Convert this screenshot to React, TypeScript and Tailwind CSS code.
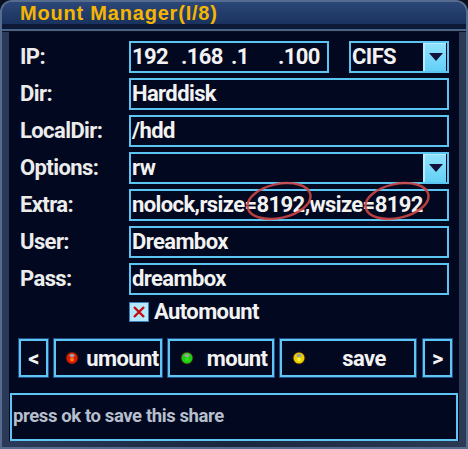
import type { ReactNode } from "react";

const face = "font-['Roboto','Liberation_Sans',sans-serif]";

function Field({
  children,
  className = "",
}: {
  children?: ReactNode;
  className?: string;
}) {
  return (
    <div
      className={
        "flex h-[32px] items-center border-2 border-[#5cc4f0] pl-[1px] text-[22px] font-bold leading-none tracking-[-0.6px] text-[#f2f2f2] " +
        className
      }
    >
      {children}
    </div>
  );
}

function DropArrow() {
  return (
    <div className="ml-auto mr-[1px] flex h-[28px] w-[23px] shrink-0 items-center justify-center border-l-2 border-t border-[#b8ecff] bg-gradient-to-b from-[#8fe2fc] to-[#62d0f6]">
      <svg width="14" height="10" viewBox="0 0 14 10">
        <polygon points="0,1 14,1 7,9" fill="#150f3c" />
      </svg>
    </div>
  );
}

function Led({ color, glow }: { color: string; glow: string }) {
  return (
    <svg className="shrink-0" width="14" height="14" viewBox="0 0 14 14">
      <circle cx="7" cy="7" r="6.5" fill="#3a1a10" />
      <circle cx="7" cy="7" r="5.5" fill={color} />
      <ellipse cx="7" cy="4.6" rx="2.6" ry="1.8" fill="#a0a0a0" />
      <circle cx="7" cy="8.5" r="2" fill={glow} />
    </svg>
  );
}

// hand-drawn red ring around a value
function Ringed({ children }: { children: ReactNode }) {
  return (
    <span className="relative">
      {children}
      <svg
        className="pointer-events-none absolute left-[-12px] top-[-12px]"
        width="68"
        height="42"
        viewBox="0 0 68 42"
      >
        <ellipse
          cx="34"
          cy="21"
          rx="32"
          ry="17"
          transform="rotate(-12 34 21)"
          fill="none"
          stroke="#cc4646"
          strokeWidth="2.5"
          opacity="0.9"
        />
      </svg>
    </span>
  );
}

function Label({ children }: { children: ReactNode }) {
  return (
    <div className="w-[120px] shrink-0 pl-[11px] text-[22px] font-bold tracking-[-0.6px] text-[#ececec]">
      {children}
    </div>
  );
}

export default function App() {
  return (
    <div className={"relative h-[449px] w-[468px] overflow-hidden bg-[#0a1020] " + face}>
      <div className="flex h-full flex-col rounded-t-[12px] border-2 border-[#566c8e] bg-gradient-to-r from-[#2a3a58] via-[#1a263e] to-[#2c3a54]">
        {/* title bar */}
        <div className="flex h-[26px] items-end rounded-t-[10px] bg-gradient-to-b from-[#2c4878] to-[#1a325e] pl-[18px]">
          <span className="font-['Liberation_Sans',sans-serif] text-[20px] font-bold leading-[22px] tracking-[0.8px] text-[#f6b600]">
            Mount Manager(I/8)
          </span>
        </div>
        <div className="h-[6px] bg-[#0c1a38]" />
        <div className="h-[2px] bg-[#4a6284]" />
        <div className="h-[1px] bg-[#0a1020]" />

        {/* body */}
        <div className="flex flex-1 flex-col px-[7px] pb-[6px]">
          <div className="flex flex-1 flex-col bg-[#020820] pt-[8px]">
            <div className="flex flex-col gap-[4px]">
              <div className="flex items-center">
                <Label>IP:</Label>
                <Field className="w-[200px]">
                  <span className="w-[49px]">192</span>
                  <span className="w-[50px]">.168</span>
                  <span className="w-[47px]">.1</span>
                  <span>.100</span>
                </Field>
                <Field className="ml-[20px] w-[100px]">
                  <span>CIFS</span>
                  <DropArrow />
                </Field>
              </div>
              <div className="flex items-center">
                <Label>Dir:</Label>
                <Field className="w-[320px]">Harddisk</Field>
              </div>
              <div className="flex items-center">
                <Label>LocalDir:</Label>
                <Field className="w-[320px]">/hdd</Field>
              </div>
              <div className="flex items-center">
                <Label>Options:</Label>
                <Field className="w-[320px]">
                  <span>rw</span>
                  <DropArrow />
                </Field>
              </div>
              <div className="flex items-center">
                <Label>Extra:</Label>
                <Field className="w-[320px]">
                  <span className="whitespace-pre">
                    nolock,rsize=<Ringed>8192</Ringed>,wsize=<Ringed>8192</Ringed>
                  </span>
                </Field>
              </div>
              <div className="flex items-center">
                <Label>User:</Label>
                <Field className="w-[320px]">Dreambox</Field>
              </div>
              <div className="flex items-center">
                <Label>Pass:</Label>
                <Field className="w-[320px]">dreambox</Field>
              </div>
            </div>

            {/* automount */}
            <div className="mt-[7px] flex h-[20px] items-center pl-[120px]">
              <div className="flex h-[20px] w-[20px] items-center justify-center border border-[#3e7fb8] bg-[#b4e8fc]">
                <svg width="14" height="14" viewBox="0 0 14 14">
                  <path d="M2 2 L12 12 M12 2 L2 12" stroke="#c40c0c" strokeWidth="2.4" />
                </svg>
              </div>
              <span className="ml-[5px] text-[22px] font-bold leading-none tracking-[-0.6px] text-[#f2f2f2]">
                Automount
              </span>
            </div>

            {/* buttons */}
            <div className="mt-[17px] flex h-[38px] gap-[6px] pl-[10px] text-[22px] font-bold tracking-[-0.6px] text-[#f2f2f2]">
              <div className="flex w-[29px] items-center justify-center border-2 border-[#5ec6f2] shadow-[0_0_0_1px_#1f4f86]">
                &lt;
              </div>
              <div className="flex w-[108px] items-center border-2 border-[#5ec6f2] pl-[9px] shadow-[0_0_0_1px_#1f4f86]">
                <Led color="#e01a00" glow="#ff7a20" />
                <span className="flex-1 pl-[6px] text-center">umount</span>
              </div>
              <div className="flex w-[106px] items-center border-2 border-[#5ec6f2] pl-[10px] shadow-[0_0_0_1px_#1f4f86]">
                <Led color="#1ccc10" glow="#30e020" />
                <span className="flex-1 pl-[8px] text-center">mount</span>
              </div>
              <div className="flex w-[136px] items-center border-2 border-[#5ec6f2] pl-[10px] shadow-[0_0_0_1px_#1f4f86]">
                <Led color="#e8d000" glow="#fff040" />
                <span className="flex-1 pl-[8px] text-center">save</span>
              </div>
              <div className="ml-[1px] flex w-[29px] items-center justify-center border-2 border-[#5ec6f2] shadow-[0_0_0_1px_#1f4f86]">
                &gt;
              </div>
            </div>

            {/* status */}
            <div className="mx-[1px] mt-[16px] flex h-[48px] items-center border-2 border-[#5ec6f2] pl-[1px] text-[18.5px] font-bold tracking-[-0.4px] text-[#b6bfcc]">
              press ok to save this share
            </div>
          </div>
        </div>
      </div>
    </div>
  );
}
